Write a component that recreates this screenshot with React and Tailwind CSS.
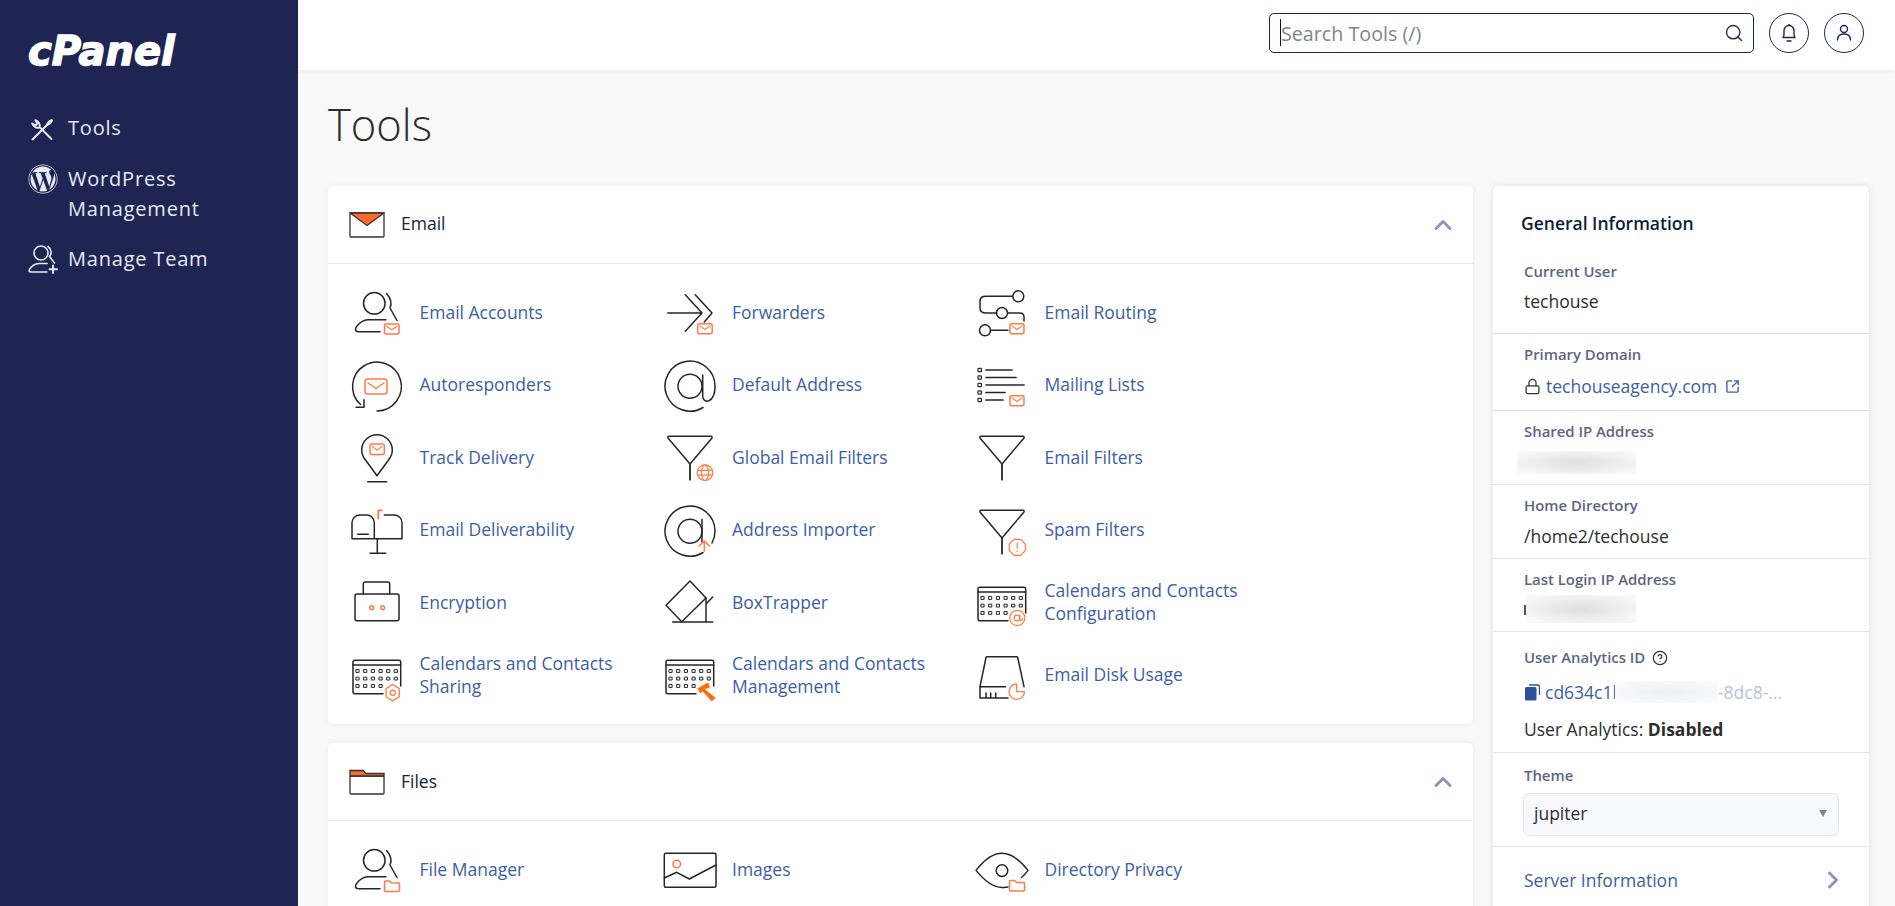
import React from "react";
import { Search, ChevronUp, ChevronRight, CircleHelp, Lock, SquareArrowOutUpRight } from "lucide-react";
import { FaWordpress } from "react-icons/fa";

const O = "#ff7a45";

function Svg({ children }) {
  return (
    <svg viewBox="0 0 56 56" className="w-14 h-14 shrink-0" fill="none" stroke="#262626" strokeWidth="1.5" strokeLinecap="round" strokeLinejoin="round">
      {children}
    </svg>
  );
}
function Env({ x, y, w = 14.5, h = 10 }) {
  return (
    <g stroke={O}>
      <rect x={x} y={y} width={w} height={h} rx="1.5" fill="#fff" />
      <path d={`M${x + w * 0.14} ${y + h * 0.22} L${x + w / 2} ${y + h * 0.58} L${x + w * 0.86} ${y + h * 0.22}`} strokeWidth="1.1" />
    </g>
  );
}
function Fold({ x, y }) {
  return <path d={`M${x} ${y + 1.5} a1 1 0 0 1 1 -1 h4 l2 2 h7 a1 1 0 0 1 1 1 v6.5 a1 1 0 0 1 -1 1 h-13 a1 1 0 0 1 -1 -1 z`} stroke={O} fill="#fff" />;
}
function Person({ children }) {
  return (
    <Svg>
      <circle cx="25.3" cy="18.3" r="10.8" />
      <path d="M37.5 8.5C42 13 43 19 41 23L48 35.5" />
      <path d="M31 46.7H10C6 46.7 5.5 44 8 41C11 37 15 35 19 34.7H37" />
      {children}
    </Svg>
  );
}
function Funnel({ children, d = 0 }) {
  return (
    <Svg>
      <g transform={`translate(0 ${d})`}>
        <path d="M7 7.3H49C50 7.3 50.5 8.3 49.8 9.2L28 35L6.2 9.2C5.5 8.3 6 7.3 7 7.3Z" />
        <path d="M28 35V50.7" strokeWidth="1.8" />
      </g>
      {children}
    </Svg>
  );
}
function Cal({ children, d = 0 }) {
  const xs = [8.7, 16.4, 24.1, 31.8, 39.4, 47];
  const ys = [24, 31.6, 39];
  return (
    <Svg>
      <g transform={`translate(0 ${d})`}>
        <path d="M34 46.7H6A2 2 0 0 1 4 44.7V15A1.7 1.7 0 0 1 5.7 13.3H50A1.7 1.7 0 0 1 51.7 15V39" />
        <path d="M4 18H51.7" />
        {ys.map((y, i) =>
          xs.slice(0, i === 2 ? 4 : 6).map((x) => <rect key={x + "-" + y} x={x - 1.4} y={y - 1.4} width="2.8" height="2.8" strokeWidth="1" fill="#fff" />)
        )}
      </g>
      {children}
    </Svg>
  );
}
function At({ children, tail }) {
  return (
    <Svg>
      <circle cx="28" cy="29.3" r="12" />
      {tail ? (
        <path d="M40.7 18V39C40.7 47 53 47 53 29.3A25 25 0 1 0 41 50.5" />
      ) : (
        <>
          <path d="M40 17.5V40" />
          <path d="M53 29.3A25 25 0 1 0 41 50.5M53 29.3A25 25 0 0 1 50 41" />
        </>
      )}
      {children}
    </Svg>
  );
}

const I = {
  accounts: <Person><Env x={35.5} y={39} /></Person>,
  forwarders: (
    <Svg>
      <path d="M5.7 28H40M23.3 9.7L40 28L23.3 46.3M33.3 9.7L50 28L42.3 37" />
      <Env x={35.7} y={38.7} />
    </Svg>
  ),
  routing: (
    <Svg>
      <path d="M38.8 11.3H12Q6 11.3 6 16V23Q6 28 12 28H22.5M33.5 28H46Q50 28 50 32V36M16.5 45.3H34" />
      <circle cx="44.3" cy="11.3" r="5.5" />
      <circle cx="28" cy="28" r="5.5" />
      <circle cx="11" cy="45.3" r="5.5" />
      <Env x={36} y={38.7} w={14} />
    </Svg>
  ),
  auto: (
    <Svg>
      <path d="M28 53.9A24.4 24.4 0 1 0 11.5 47.5" />
      <path d="M7 50.3H15V42.7" />
      <g stroke={O}>
        <rect x="16" y="22" width="22" height="15" rx="2.5" />
        <path d="M19 26L27 31.5L35 26" />
      </g>
    </Svg>
  ),
  defaultAddr: <At tail />,
  lists: (
    <Svg>
      {[13, 20.5, 28, 35.5, 43].map((y) => <rect key={y} x="4" y={y - 1.7} width="3.4" height="3.4" rx="0.6" strokeWidth="1.2" />)}
      <path d="M12 13H38M12 20.5H42M12 28H50M12 35.5H31M12 43H29" strokeWidth="1.7" />
      <Env x={36} y={38.7} w={14} />
    </Svg>
  ),
  track: (
    <Svg>
      <path d="M28 46.7L16.5 31C14 28 12.7 25 12.7 21A15.3 15.3 0 0 1 43.3 21C43.3 25 42 28 39.5 31Z" />
      <path d="M18.7 52.7H37.7" />
      <Env x={21} y={15} w={14.3} h={10.5} />
    </Svg>
  ),
  global: (
    <Funnel>
      <g stroke={O} strokeWidth="1.2">
        <circle cx="43" cy="43.7" r="7.8" />
        <ellipse cx="43" cy="43.7" rx="3.4" ry="7.8" />
        <path d="M35.4 41.3H50.6M35.4 46.1H50.6" />
      </g>
    </Funnel>
  ),
  filters: <Funnel />,
  deliver: (
    <Svg>
      <path d="M3 36.7V20.7A7.7 7.7 0 0 1 10.7 13H17.6A7.7 7.7 0 0 1 25.3 20.7V36.7M35.3 13H45.3A7.7 7.7 0 0 1 53 20.7V36.7H3" />
      <path d="M28.3 36.7V51.3M21 51.3H36.7M8.7 32.3H19.3" />
      <path d="M29.3 17.3V8.3H33.3" stroke={O} strokeWidth="1.8" strokeLinecap="butt" />
    </Svg>
  ),
  importer: (
    <At>
      <path d="M42.3 49V39M37 44L42.3 39L47.5 44" stroke={O} />
    </At>
  ),
  spam: (
    <Funnel d={1}>
      <g stroke={O} strokeWidth="1.2">
        <path d="M40 37.3H46.6L51.3 42V48.6L46.6 53.3H40L35.3 48.6V42Z" fill="#fff" />
        <path d="M43.3 41V46.3M43.3 49V49.4" />
      </g>
    </Funnel>
  ),
  encryption: (
    <Svg>
      <rect x="6" y="20" width="44" height="26.7" rx="2" />
      <path d="M14.3 20V10A2 2 0 0 1 16.3 8H38.7A2 2 0 0 1 40.7 10V20" />
      <circle cx="22.7" cy="33.7" r="1.9" stroke={O} />
      <circle cx="33.7" cy="33.7" r="1.9" stroke={O} />
    </Svg>
  ),
  box: (
    <Svg>
      <path d="M28 7L44 24L19.7 47.7L4 31.3Z" />
      <path d="M10.7 48H50.7M44 24V48M44 30L50.7 23" />
    </Svg>
  ),
  calConfig: (
    <Cal>
      <g stroke={O} strokeWidth="1.2">
        <circle cx="43.3" cy="44" r="7.6" fill="#fff" />
        <circle cx="43" cy="44" r="2.8" />
        <path d="M45.8 41.2V45.5C45.8 47.2 48.4 47 48.4 44.5" />
      </g>
    </Cal>
  ),
  calShare: (
    <Cal>
      <g stroke={O} strokeWidth="1.3">
        <path d="M43.7 37.5L50.3 41.6V49.8L43.7 53.9L37.1 49.8V41.6Z" fill="#fff" />
        <circle cx="43.7" cy="45.7" r="2.6" />
      </g>
    </Cal>
  ),
  calManage: (
    <Cal>
      <path d="M35 41.3L46.3 35L48.3 40.7L43.3 42.3L54 50.7L49.7 54.7L40.7 44.7L38.3 46.7Z" fill="#ff6c0a" stroke="#fff" strokeWidth="0.6" />
    </Cal>
  ),
  disk: (
    <Svg>
      <path d="M6 39.7L12 10.5Q12.2 9.7 13 9.7H42.7Q43.5 9.7 43.7 10.5L50 39.7" />
      <path d="M6 39.7V51H34M6 39.7H31.5M12 46V51M16.7 46V51M21.7 46V51" />
      <g stroke={O} strokeWidth="1.3">
        <path d="M42.7 37A7.7 7.7 0 1 0 50.4 44.7H42.7Z" fill="#fff" />
      </g>
    </Svg>
  ),
  fileMgr: <Person><Fold x={35.5} y={38.5} /></Person>,
  images: (
    <Svg>
      <rect x="2.3" y="11.3" width="51.7" height="34" rx="1.5" />
      <path d="M2.3 36L14.7 30.3L27.3 37L54 23" />
      <circle cx="14.7" cy="22" r="3.8" stroke={O} />
    </Svg>
  ),
  privacy: (
    <Svg>
      <path d="M34 45C31 45.3 29.5 45.5 28 45.5C18 45.5 9 37 2 28.4C9 19.5 18 11.3 28 11.3C38 11.3 47 19.5 54 28.4C52 31 50 33.5 47.5 35.5" />
      <circle cx="28" cy="28.6" r="5.8" />
      <Fold x={35.5} y={38} />
    </Svg>
  ),
};

const email = [
  ["Email Accounts", I.accounts], ["Forwarders", I.forwarders], ["Email Routing", I.routing],
  ["Autoresponders", I.auto], ["Default Address", I.defaultAddr], ["Mailing Lists", I.lists],
  ["Track Delivery", I.track], ["Global Email Filters", I.global], ["Email Filters", I.filters],
  ["Email Deliverability", I.deliver], ["Address Importer", I.importer], ["Spam Filters", I.spam],
  ["Encryption", I.encryption], ["BoxTrapper", I.box], ["Calendars and Contacts Configuration", I.calConfig],
  ["Calendars and Contacts Sharing", I.calShare], ["Calendars and Contacts Management", I.calManage], ["Email Disk Usage", I.disk],
];
const files = [["File Manager", I.fileMgr], ["Images", I.images], ["Directory Privacy", I.privacy]];

function Card({ icon, title, items, className = "" }) {
  return (
    <section className={`bg-white rounded-[5px] shadow-[0_0_6px_rgba(0,0,0,0.06)] ${className}`}>
      <div className="h-[78px] flex items-center border-b border-[#e8e9f0] pl-[21px] pr-[16px]">
        <span className="w-[52px] flex">{icon}</span>
        <h2 className="text-[17.5px] text-[#12233f] -mt-[2px]">{title}</h2>
        <ChevronUp className="ml-auto text-[#8c99b5]" size={28} strokeWidth={2.6} />
      </div>
      <div className="pl-[21px] pt-[12.4px] pb-[13.6px] grid grid-cols-[repeat(3,312.5px)] auto-rows-[72.4px]">
        {items.map(([label, ic]) => (
          <a key={label} className="flex items-center">
            <span className="w-[70.5px] shrink-0 flex">{ic}</span>
            <span className="text-[17.5px] leading-[23px] text-[#3c5ea9] max-w-[225px]">{label}</span>
          </a>
        ))}
      </div>
    </section>
  );
}

function Label({ children }) {
  return <div className="text-[14.9px] leading-[20px] pb-[2px] font-semibold text-[#5c6680]">{children}</div>;
}

function Redact({ className }) {
  return <div className={`bg-[radial-gradient(ellipse_at_center,#dfdfdf,#f8f8f8_85%)] ${className}`} />;
}

export default function App() {
  return (
    <div className="flex h-screen overflow-hidden bg-[#f9f9f9] text-[#2d2d2d] font-['Open_Sans',sans-serif]">
      <aside className="w-[298px] shrink-0 bg-[#1f2552] text-[#e6ebf5] pl-[28px]">
        <div className="h-[35px]" />
        <div className="h-[31px] flex items-center text-white italic font-bold font-['DejaVu_Sans',sans-serif] text-[40px] leading-none [-webkit-text-stroke:1.4px_white]">cPanel</div>
        <nav className="mt-[45px] flex flex-col text-[20px] tracking-[0.8px]">
          <a className="flex items-center h-[34px] mb-[19px]">
            <svg viewBox="0 0 24 24" className="w-[24px] h-[24px] ml-[2px] mr-[14px] mt-[4px]" fill="none" stroke="#e6ebf5" strokeWidth="2" strokeLinecap="round" strokeLinejoin="round">
              <path d="M2.5 21.5L13.5 10.5M16 8L19 3.5L21.5 2L22 2.5L20.5 5L16 8ZM13.5 10.5L16 8" />
              <path d="M21.5 21L9.5 9C10.3 6.5 9 3.5 5.5 2.2L7.5 5.5L5.5 7.5L2.2 5.5C3.5 9 6.5 10.3 9 9.5" />
            </svg>
            Tools
          </a>
          <a className="flex items-start leading-[30px] mb-[20px]">
            <FaWordpress className="mr-[10px] shrink-0" size={30} />
            <span>WordPress<br />Management</span>
          </a>
          <a className="flex items-center h-[30px]">
            <svg viewBox="0 0 30 30" className="w-[30px] h-[30px] mr-[10px]" fill="none" stroke="#e6ebf5" strokeWidth="1.6" strokeLinecap="round">
              <circle cx="13" cy="9" r="7" />
              <path d="M20 2.5C23.5 5 24 10 21.5 12.5L26.5 19" />
              <path d="M19 28H3C1 28 .5 26.5 2 24.5C4.5 21 8 19.5 12 19.5H19" />
              <path d="M25 21.5V29M21.5 25.3H29" strokeWidth="1.9" />
            </svg>
            Manage Team
          </a>
        </nav>
      </aside>

      <main className="flex-1 min-w-0 flex flex-col">
        <header className="h-[70px] shrink-0 bg-white shadow-[0_1px_4px_rgba(0,0,0,0.08)] flex items-center justify-end pr-[31px] pb-[4px] gap-[15px]">
          <div className="relative w-[485px] h-[40px]">
            <input
              readOnly
              placeholder="Search Tools (/)"
              className="w-full h-full border border-[#1f2552] rounded-[5px] pl-[11px] pr-[40px] text-[19.7px] outline-none placeholder:text-[#7d8691] font-['Open_Sans',sans-serif]"
            />
            <span className="absolute left-[11px] top-[6px] h-[27px] w-px bg-[#111]" />
            <Search className="absolute right-[10px] top-[10px] text-[#2e3a45]" size={20} strokeWidth={1.8} />
          </div>
          <button className="w-[40px] h-[40px] rounded-full border border-[#1f2552] flex items-center justify-center">
            <svg viewBox="0 0 20 20" className="w-[20px] h-[20px]" fill="none" stroke="#1f2552" strokeWidth="1.4" strokeLinecap="round" strokeLinejoin="round">
              <path d="M4 14.5C5 13.5 5 12.5 5 11V7.5A5 5 0 0 1 15 7.5V11C15 12.5 15 13.5 16 14.5H4Z" />
              <path d="M8 18H12M10 1.5V2.5" />
            </svg>
          </button>
          <button className="w-[40px] h-[40px] rounded-full border border-[#1f2552] flex items-center justify-center">
            <svg viewBox="0 0 20 20" className="w-[20px] h-[20px]" fill="none" stroke="#1f2552" strokeWidth="1.4" strokeLinecap="round">
              <circle cx="10" cy="6" r="3.5" />
              <path d="M3.5 17C3.5 13 6 11 10 11C14 11 16.5 13 16.5 17" />
            </svg>
          </button>
        </header>

        <div className="flex-1 min-h-0 overflow-hidden pl-[30px] pr-[26px]">
          <h1 className="mt-[24px] h-[62px] leading-[62px] text-[43.5px] font-light text-[#2d2d2d]">Tools</h1>
          <div className="mt-[30px] flex gap-[20px] items-start">
            <div className="w-[1145px] flex flex-col gap-[19px]">
              <Card
                title="Email"
                items={email}
                icon={
                  <svg viewBox="0 0 36 26" className="w-[36px] h-[26px]" fill="none" stroke="#333" strokeWidth="1.3">
                    <rect x="1" y="1" width="34" height="24" rx="1" />
                    <path d="M1 1H35L18 13.5Z" fill="#ff6a2b" />
                  </svg>
                }
              />
              <Card
                title="Files"
                items={files}
                icon={
                  <svg viewBox="0 0 36 26" className="w-[36px] h-[26px]" fill="none" stroke="#333" strokeWidth="1.3">
                    <rect x="1" y="7" width="34" height="18" rx="1" />
                    <path d="M1 7V1.5H14L17 4.5H35V7Z" fill="#ff6a2b" />
                  </svg>
                }
              />
            </div>

            <aside className="w-[376px] shrink-0 bg-white rounded-[5px] shadow-[0_0_6px_rgba(0,0,0,0.12)] text-[17.5px]">
              <div className="px-[31px] pt-[25px] pb-[20px] border-b border-[#e2e2e4]">
                <h3 className="-ml-[3px] text-[17.5px] leading-[24px] font-semibold text-[#0c1f36]">General Information</h3>
                <div className="mt-[26px]"><Label>Current User</Label></div>
                <div className="mt-[6px] leading-[24px]">techouse</div>
              </div>
              <div className="px-[31px] pt-[10px] pb-[12px] border-b border-[#e2e2e4]">
                <Label>Primary Domain</Label>
                <div className="mt-[8px] leading-[24px] flex items-center">
                  <Lock size={17} strokeWidth={1.8} className="mr-[5px] text-[#333]" />
                  <span className="text-[#3c5ea9]">techouseagency.com</span>
                  <SquareArrowOutUpRight size={15} strokeWidth={2.2} className="ml-[8px] text-[#3c5ea9]" />
                </div>
              </div>
              <div className="px-[31px] pt-[10px] pb-[10px] border-b border-[#e2e2e4]">
                <Label>Shared IP Address</Label>
                <Redact className="-ml-[7px] mt-[8px] w-[119px] h-[23px]" />
              </div>
              <div className="px-[31px] pt-[10px] pb-[10px] border-b border-[#e2e2e4]">
                <Label>Home Directory</Label>
                <div className="mt-[7px] leading-[24px]">/home2/techouse</div>
              </div>
              <div className="px-[31px] pt-[10px] pb-[8px] border-b border-[#e2e2e4]">
                <Label>Last Login IP Address</Label>
                <div className="flex items-end h-[28px] mt-[4px]">
                  <span className="w-[2px] h-[10px] mb-[8px] bg-[#555]" />
                  <Redact className="w-[110px] h-[28px]" />
                </div>
              </div>
              <div className="px-[31px] pt-[15px] pb-[11px] border-b border-[#e2e2e4]">
                <div className="flex items-center"><Label>User Analytics ID</Label><CircleHelp size={16} strokeWidth={1.8} className="ml-[7px] text-[#333]" /></div>
                <div className="mt-[11px] h-[24px] flex items-center">
                  <svg viewBox="0 0 16 17" className="w-[16px] h-[17px] mr-[5px]">
                    <path d="M5 1H14A1.5 1.5 0 0 1 15.5 2.5V11" fill="none" stroke="#2d4f9c" strokeWidth="1.3" />
                    <rect x="1" y="3" width="11.5" height="13.5" rx="1.5" fill="#2d4f9c" />
                  </svg>
                  <span className="text-[#3c5ea9]">cd634c1l</span>
                  <div className="-ml-[2px] w-[103px] h-[22px] bg-[radial-gradient(ellipse_at_center,#eceef5,#fbfbfd_85%)]" />
                  <span className="text-[#b6c2dd]">-8dc8-...</span>
                </div>
                <div className="mt-[13px] leading-[24px]">User Analytics: <b className="font-bold">Disabled</b></div>
              </div>
              <div className="px-[31px] pt-[12px] pb-[10px] border-b border-[#e2e2e4]">
                <Label>Theme</Label>
                <div className="mt-[6px] w-[316px] h-[43px] -ml-px rounded-[6px] border border-[#e3e6ee] bg-[#f8f9fc] flex items-center pl-[10px] pr-[11px] pb-[2px] text-[#2d2d2d]">
                  jupiter
                  <span className="ml-auto w-0 h-0 border-x-[4.5px] border-x-transparent border-t-[7px] border-t-[#80858f]" />
                </div>
              </div>
              <div className="pl-[31px] pr-[22px] pt-[19px] pb-[30px] flex items-center">
                <span className="text-[#3c5ea9] leading-[24px]">Server Information</span>
                <ChevronRight size={28} strokeWidth={2.6} className="ml-auto text-[#8c99b5]" />
              </div>
            </aside>
          </div>
        </div>
      </main>
    </div>
  );
}
